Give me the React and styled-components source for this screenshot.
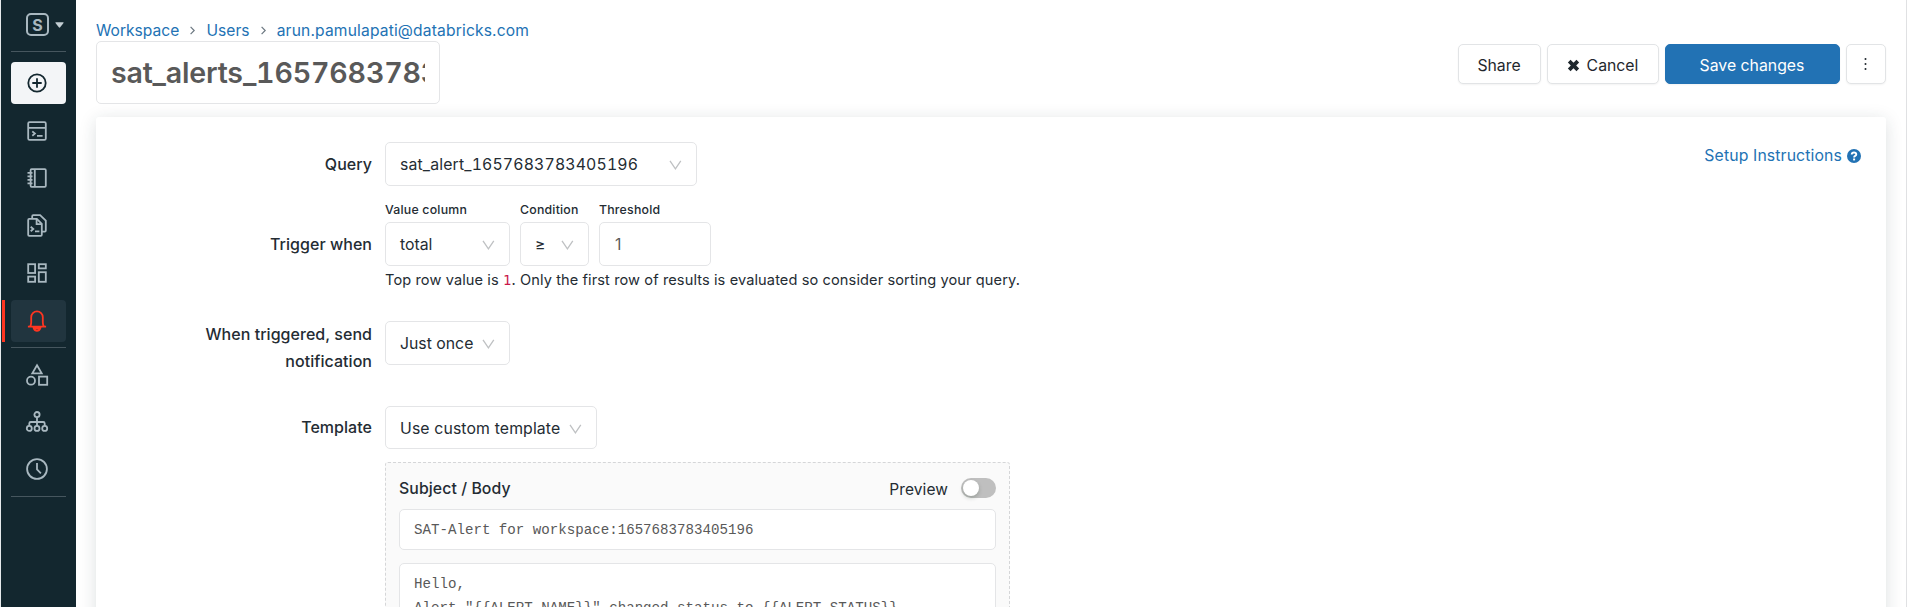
import React from 'react';
import styled, { createGlobalStyle } from 'styled-components';

const GlobalStyle = createGlobalStyle`
  * { box-sizing: border-box; }
  body {
    margin: 0;
    height: 607px;
    overflow: hidden;
    background: #fff;
    color: #242c33;
    font: 400 15.8px/24px Inter, "Liberation Sans", sans-serif;
  }
  button, input { font: inherit; color: inherit; margin: 0; }
`;

const Shell = styled.div`
  display: flex;
  height: 607px;
  overflow: hidden;
  border-right: 1px solid #e0e1e3;
`;

const Sidebar = styled.nav`
  flex: none;
  width: 76px;
  padding: 0 10px;
  border-left: 1px solid #e6eaec;
  background: #13272f;
  color: #a9b8c0;
`;

const Brand = styled.div`
  display: flex;
  align-items: center;
  gap: 6px;
  height: 51px;
  padding: 0 0 2px 15px;
`;

const BrandMark = styled.span`
  display: grid;
  place-items: center;
  width: 23px;
  height: 23px;
  border: 2px solid currentColor;
  border-radius: 5px;
  font-size: 16px;
  font-weight: 700;
  line-height: 1;
`;

const Divider = styled.hr`
  height: 1px;
  margin: ${(p) => p.$margin || '0'};
  border: 0;
  background: #46565e;
`;

const NavGroup = styled.div`
  display: flex;
  flex-direction: column;
  gap: 5.5px;
`;

const NavItem = styled.a`
  position: relative;
  display: flex;
  align-items: center;
  justify-content: center;
  height: 42px;
  padding-right: 2.5px;
  border-radius: 4px;
  color: ${(p) => (p.$active ? '#ff3621' : p.$primary ? '#13272f' : 'inherit')};
  background: ${(p) => (p.$active ? '#21353f' : p.$primary ? '#f3f5f7' : 'transparent')};

  &::before {
    content: '';
    display: ${(p) => (p.$active ? 'block' : 'none')};
    position: absolute;
    left: -9px;
    top: 0;
    bottom: 0;
    width: 3px;
    background: #ff3621;
  }
`;

const Main = styled.main`
  flex: 1;
  padding: 18px 20px 0;
`;

const Header = styled.header`
  display: flex;
  justify-content: space-between;
  height: 99px;
`;

const Breadcrumb = styled.div`
  display: flex;
  align-items: center;
  height: 23px;
  padding-top: 2px;
  color: #2272b4;
  line-height: 21px;
`;

const Crumb = styled.a`
  font-size: 15.6px;
  letter-spacing: ${(p) => p.$spacing || '0'};
`;

const CrumbArrow = styled.svg`
  width: 5px;
  height: 9px;
  margin: 0 11.2px 0 11px;
  color: #6b7780;
`;

const TitleInput = styled.input`
  display: block;
  width: 344px;
  height: 63px;
  padding: 0 14px;
  border: 1px solid #e4e5e7;
  border-radius: 5px;
  background: #fff;
  color: #595959;
  font-size: 28.6px;
  font-weight: 600;
  font-feature-settings: 'tnum';
  letter-spacing: -0.2px;
  outline: none;
`;

const Actions = styled.div`
  display: flex;
  gap: 6px;
  margin-top: 26px;
`;

const Button = styled.button`
  display: flex;
  align-items: center;
  justify-content: center;
  gap: 7px;
  width: ${(p) => p.$width};
  height: 40px;
  padding: 3px 1px 0 0;
  border: 1px solid ${(p) => (p.$primary ? '#2272b4' : '#e2e4e6')};
  border-radius: 5px;
  background: ${(p) => (p.$primary ? '#2272b4' : '#fff')};
  color: ${(p) => (p.$primary ? '#fff' : '#1f272d')};
  box-shadow: 0 1px 2px rgba(0, 0, 0, 0.05);

  svg { margin-top: ${(p) => (p.$iconOnly ? '-3px' : '0')}; }
`;

const Card = styled.section`
  display: flex;
  justify-content: space-between;
  height: 560px;
  padding: 25px 25px 0 0;
  border-radius: 3px;
  background: #fff;
  box-shadow: 0 3px 17px rgba(27, 49, 57, 0.15);
`;

const Form = styled.div`
  width: 915px;
`;

const Row = styled.div`
  display: grid;
  grid-template-columns: 276px 1fr;
  column-gap: 13px;
  margin-bottom: ${(p) => p.$after};
`;

const Label = styled.label`
  padding-top: ${(p) => p.$top || '9px'};
  font-size: 16px;
  font-weight: 500;
  line-height: 27px;
  letter-spacing: 0.04px;
  text-align: right;
`;

const Fields = styled.div`
  display: flex;
  gap: 10.5px;
`;

const Field = styled.div`
  display: flex;
  flex-direction: column;
`;

const FieldLabel = styled.span`
  height: 19px;
  font-size: 12.3px;
  font-weight: 500;
  line-height: 14px;
  letter-spacing: 0.22px;
`;

const SelectBox = styled.div`
  display: flex;
  align-items: center;
  justify-content: space-between;
  width: ${(p) => p.$width};
  height: ${(p) => p.$height || '44px'};
  padding: ${(p) => p.$drop || '1px'} 14px 0;
  border: 1px solid #e4e5e7;
  border-radius: 5px;
  background: #fff;
  white-space: nowrap;
  letter-spacing: ${(p) => p.$spacing || '0'};
  font-feature-settings: ${(p) => (p.$tabular ? "'tnum'" : 'normal')};
`;

const NumberInput = styled.input`
  width: 112px;
  height: 44px;
  padding: 1px 15px 0;
  border: 1px solid #e4e5e7;
  border-radius: 5px;
  color: #595959;
  outline: none;
`;

const Hint = styled.p`
  margin: 0;
  font-size: 14.6px;
  line-height: 28px;
  white-space: nowrap;
  letter-spacing: 0.1px;
`;

const Code = styled.code`
  color: #c9184a;
  font: 13.8px "DejaVu Sans Mono", monospace;
`;

const HelpLink = styled.a`
  display: flex;
  gap: 5px;
  align-items: center;
  height: 27px;
  color: #2272b4;
  letter-spacing: 0.12px;
`;

const TemplatePanel = styled.div`
  width: 625px;
  height: 200px;
  margin: 0 0 0 289px;
  padding: 12px 13px 0;
  border: 1px dashed #d5d6d8;
  border-radius: 3px;
  background: #fafafa;
`;

const PanelHead = styled.div`
  display: flex;
  align-items: center;
  justify-content: space-between;
  height: 28px;
  margin-bottom: 6px;
  font-weight: 500;
  letter-spacing: 0.09px;
`;

const PreviewToggle = styled.div`
  display: flex;
  align-items: flex-start;
  gap: 13px;
  padding-top: 2px;
  font-size: 15.5px;
  font-weight: 400;
  line-height: 24px;
`;

const Switch = styled.span`
  display: flex;
  width: 35px;
  height: 20px;
  padding: 2px;
  border-radius: 10px;
  background: #bfbfbf;

  &::after {
    content: '';
    width: 16px;
    height: 16px;
    border-radius: 50%;
    background: #fff;
    box-shadow: 0 2px 4px rgba(0, 35, 11, 0.2);
  }
`;

const MonoBox = styled.div`
  height: ${(p) => p.$height};
  margin-bottom: 13px;
  padding: 8px 14px;
  border: 1px solid #e4e5e7;
  border-radius: 5px;
  background: #fff;
  color: #595959;
  font: 14.15px/24px "Liberation Mono", monospace;
  white-space: pre;
`;

const Glyph = styled.svg`
  flex: none;
  display: block;
  overflow: visible;
  fill: none;
  stroke: currentColor;
  stroke-width: ${(p) => p.$weight || 1.8};
`;

const Icon = ({ children, width = 20, height = 20 }) => (
  <Glyph width={width} height={height} viewBox={`0 0 ${width} ${height}`}>{children}</Glyph>
);

const Chevron = () => (
  <Glyph width="13" height="10" viewBox="0 0 13 10" color="#bfc1c3" $weight={1.3}>
    <path d="M1 .8l5.400 8L11.800 .8" />
  </Glyph>
);

const Select = ({ children, ...rest }) => (
  <SelectBox {...rest}>
    <span>{children}</span>
    <Chevron />
  </SelectBox>
);

const Separator = () => (
  <CrumbArrow viewBox="0 0 5 9">
    <path d="M.6.8l3.600 3.700L.6 8.200" fill="none" stroke="currentColor" strokeWidth="1.200" />
  </CrumbArrow>
);

const PlusIcon = () => (
  <Icon><circle cx="10" cy="10" r="8.700" /><path d="M10 5.300v9.400M5.300 10h9.400" /></Icon>
);
const QueryIcon = () => (
  <Icon><rect x="1.200" y="1.200" width="17.600" height="17.600" rx="1.400" /><path d="M1.200 6.900h17.600M5.300 10.400l2.600 2.200-2.600 2.200M10 14.800h5.600" /></Icon>
);
const NotebookIcon = () => (
  <Icon><rect x="3.600" y="1.200" width="15.200" height="17.600" rx="1" /><path d="M7.800 1.200v17.600M.5 4.800h5M.5 8.300h5M.5 11.800h5M.5 15.300h5" /></Icon>
);
const FilesIcon = () => (
  <Icon height={23}>
    <path d="M1.200 5.900q0-1 1-1h7.600l5 5v10.900q0 1-1 1H2.200q-1 0-1-1z" />
    <path d="M9.600 4.900v5.200h5.200M5.200 4.900V2.200q0-1 1-1h6.900l5.700 5.400v10q0 1-1 1h-3" />
    <path d="M3.700 12.800l2.600 2.200-2.600 2.200M8 17.300h4.400" />
  </Icon>
);
const DashboardIcon = () => (
  <Icon>
    <rect x="1.200" y="1.200" width="6.900" height="8.800" /><rect x="11.800" y="1.200" width="7" height="4.200" />
    <rect x="1.200" y="13.600" width="6.900" height="5.200" /><rect x="11.800" y="9.200" width="7" height="9.600" />
  </Icon>
);
const BellIcon = () => (
  <Icon height={22}>
    <path d="M.9 16.600h18.200M3 16.600q1.200-1.500 1.200-4V7.200a5.800 5.800 0 0 1 11.600 0v5.400q0 2.500 1.200 4M6.800 18.500q.8 2.300 3.200 2.300t3.200-2.300z" />
  </Icon>
);
const ShapesIcon = () => (
  <Icon width={22} height={23}>
    <path d="M11 2.200l4.700 8.200H6.300z" /><circle cx="5" cy="17.700" r="4" /><rect x="13" y="13.600" width="8.200" height="8.200" />
  </Icon>
);
const TreeIcon = () => (
  <Icon width={22} height={21}>
    <circle cx="11" cy="3.600" r="2.600" /><circle cx="3.300" cy="17.400" r="2.500" />
    <circle cx="11" cy="17.400" r="2.500" /><circle cx="18.700" cy="17.400" r="2.500" />
    <path d="M11 6.200v8.700M3.300 14.900v-2.400q0-1.500 1.500-1.500h12.400q1.500 0 1.500 1.500v2.400" />
  </Icon>
);
const ClockIcon = () => (
  <Icon width={22} height={22}><circle cx="11" cy="11" r="9.900" /><path d="M11 4.900v6.500l3.900 3.900" /></Icon>
);

const NAV_TOP = [
  { icon: PlusIcon, primary: true },
  { icon: QueryIcon },
  { icon: NotebookIcon },
  { icon: FilesIcon },
  { icon: DashboardIcon },
  { icon: BellIcon, active: true },
];
const NAV_BOTTOM = [{ icon: ShapesIcon }, { icon: TreeIcon }, { icon: ClockIcon }];

const NavList = ({ items }) => (
  <NavGroup>
    {items.map(({ icon: ItemIcon, primary, active }, i) => (
      <NavItem key={i} $primary={primary} $active={active}><ItemIcon /></NavItem>
    ))}
  </NavGroup>
);

export default function App() {
  return (
    <Shell>
      <GlobalStyle />
      <Sidebar>
        <Brand>
          <BrandMark>S</BrandMark>
          <svg width="9" height="6" viewBox="0 0 9 6"><path d="M.9.300h7.200q.9 0 .4.800L5.200 5.300q-.7.700-1.400 0L.5 1.100Q0 .3.900.3z" fill="#c3ced3" /></svg>
        </Brand>
        <Divider $margin="0 0 10px" />
        <NavList items={NAV_TOP} />
        <Divider $margin="5.500px 0 5px" />
        <NavList items={NAV_BOTTOM} />
        <Divider $margin="6px 0 0" />
      </Sidebar>
      <Main>
        <Header>
          <div>
            <Breadcrumb>
              <Crumb>Workspace</Crumb>
              <Separator />
              <Crumb>Users</Crumb>
              <Separator />
              <Crumb $spacing="0.16px">arun.pamulapati@databricks.com</Crumb>
            </Breadcrumb>
            <TitleInput readOnly value="sat_alerts_1657683783405196" />
          </div>
          <Actions>
            <Button $width="83px">Share</Button>
            <Button $width="112px">
              <svg width="13" height="13" viewBox="0 0 13 13"><path d="M2.200 2.200l8.600 8.600M10.800 2.200L2.200 10.800" stroke="currentColor" strokeWidth="3.800" /></svg>
              Cancel
            </Button>
            <Button $width="175px" $primary>Save changes</Button>
            <Button $width="40px" $iconOnly>
              <svg width="3" height="14" viewBox="0 0 3 14" fill="currentColor"><circle cx="1.500" cy="2" r="1" /><circle cx="1.500" cy="7" r="1" /><circle cx="1.500" cy="12" r="1" /></svg>
            </Button>
          </Actions>
        </Header>
        <Card>
          <Form>
            <Row $after="17px">
              <Label>Query</Label>
              <Select $width="312px" $spacing="0.16px" $tabular>sat_alert_1657683783405196</Select>
            </Row>
            <Row $after="27px">
              <Label $top="28px">Trigger when</Label>
              <div>
                <Fields>
                  <Field>
                    <FieldLabel>Value column</FieldLabel>
                    <Select $width="124.500px">total</Select>
                  </Field>
                  <Field>
                    <FieldLabel>Condition</FieldLabel>
                    <Select $width="68.500px">≥</Select>
                  </Field>
                  <Field>
                    <FieldLabel>Threshold</FieldLabel>
                    <NumberInput readOnly value="1" />
                  </Field>
                </Fields>
                <Hint>Top row value is <Code>1</Code>. Only the first row of results is evaluated so consider sorting your query.</Hint>
              </div>
            </Row>
            <Row $after="31px">
              <Label $top="0">When triggered, send<br />notification</Label>
              <Select $width="124.500px" $drop="2px">Just once</Select>
            </Row>
            <Row $after="13px">
              <Label $top="8px">Template</Label>
              <Select $width="212px" $height="43px" $spacing="0.13px" $drop="2px">Use custom template</Select>
            </Row>
            <TemplatePanel>
              <PanelHead>
                Subject / Body
                <PreviewToggle>Preview<Switch /></PreviewToggle>
              </PanelHead>
              <MonoBox $height="41px">SAT-Alert for workspace:1657683783405196</MonoBox>
              <MonoBox $height="120px">{'Hello,\nAlert "{{ALERT_NAME}}" changed status to {{ALERT_STATUS}}'}</MonoBox>
            </TemplatePanel>
          </Form>
          <HelpLink>
            Setup Instructions
            <svg width="14" height="14" viewBox="0 0 14 14">
              <circle cx="7" cy="7" r="7" fill="#2272b4" />
              <path d="M4.700 5.500q.2-2 2.300-2t2.300 1.800q0 1-1.100 1.600-1.100.6-1.100 1.500" fill="none" stroke="#fff" strokeWidth="1.900" />
              <rect x="6.100" y="9.500" width="2" height="1.900" fill="#fff" />
            </svg>
          </HelpLink>
        </Card>
      </Main>
    </Shell>
  );
}
